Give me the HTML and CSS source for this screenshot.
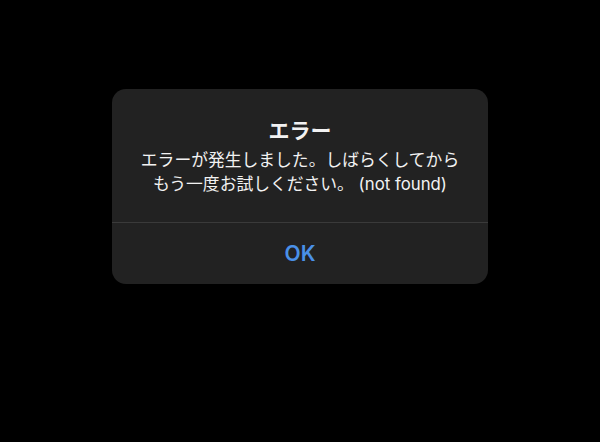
FILE: index.html
```html
<!DOCTYPE html>
<html lang="ja">

<head>
  <meta charset="UTF-8">
  <meta name="viewport" content="width=device-width, initial-scale=1.0">
  <title>エラー</title>
  <link rel="stylesheet" href="styles.css">
</head>

<body>
  <div class="screen">
    <div class="alert">
      <div class="alertBody">
        <h2 class="alertTitle">エラー</h2>
        <p class="alertMsg">
          エラーが発生しました。しばらくしてから<br>
          もう一度お試しください。 (not found)
        </p>
      </div>
      <button class="alertBtn">OK</button>
    </div>
  </div>
</body>

</html>
```
FILE: styles.css
```css
html,
body {
  margin: 0;
  padding: 0;
  background-color: #000;
}

.screen {
  width: 600px;
  height: 442px;
  padding-top: 89px;
  box-sizing: border-box;
  font-family: "Inter", "Noto Sans CJK JP", sans-serif;
}

.alert {
  width: 376px;
  margin-left: 112px;
  background-color: #222222;
  border-radius: 14px;
  overflow: hidden;
}

.alertBody {
  padding: 30px 10px 26px;
  border-bottom: 1px solid #3a3a3a;
  text-align: center;
  color: #f2f2f2;
}

.alertTitle {
  margin: 0 0 5px;
  font-size: 21px;
  line-height: 24px;
  font-weight: bold;
}

.alertMsg {
  margin: 0;
  font-size: 16.8px;
  line-height: 24px;
}

.alertBtn {
  display: block;
  width: 100%;
  height: 61px;
  border: none;
  background: none;
  color: #4a90e8;
  font-family: inherit;
  font-size: 21px;
  font-weight: 600;
  outline: none;
}
```
